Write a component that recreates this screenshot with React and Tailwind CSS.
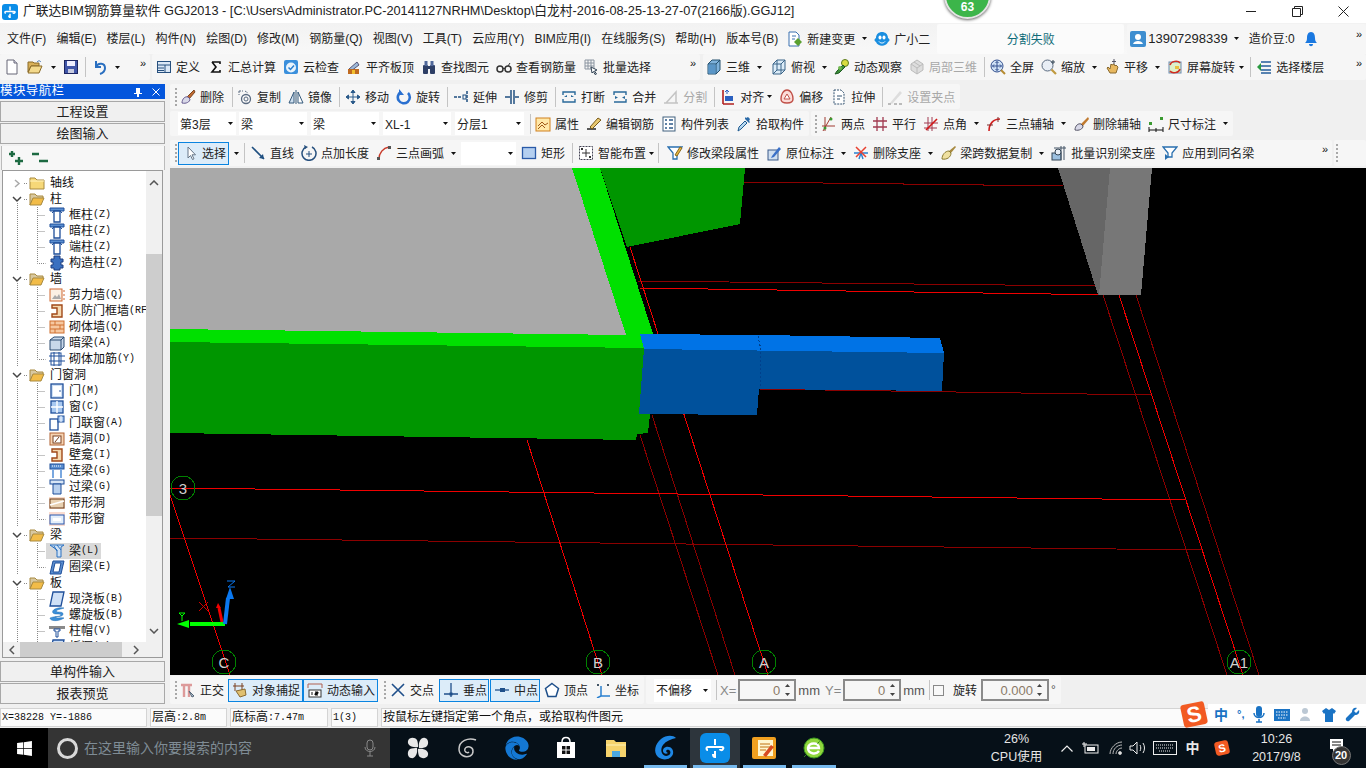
import { FaEdge, FaWindows } from 'react-icons/fa';

// toolbar and tree icons, all on a 16x16 grid
const I = {
  page: <><path d="M3 1h7l3 3v11H3z" fill="#fff" stroke="#667" /><path d="M10 1v3h3" fill="#dde" stroke="#667" /></>,
  open: <><path d="M1 3h5l1 1h5v3H4l-3 6z" fill="#d8b058" stroke="#8a6a28" /><path d="M4 7h11l-3 7H1z" fill="#f3d98c" stroke="#8a6a28" /><path d="M10 3c2-2 3-1 4 0" fill="none" stroke="#3a70b0" /></>,
  save: <><rect x="1.5" y="1.5" width="13" height="13" fill="#4055a8" stroke="#1c2560" /><rect x="4" y="2" width="8" height="5" fill="#eef" /><rect x="5" y="10" width="6" height="4" fill="#c8cce0" /></>,
  undo: <path d="M4 2v6h5M4 8c2-5 9-4 9 1 0 3-2 5-5 6" fill="none" stroke="#2a6fc0" strokeWidth="2" />,
  define: <><rect x="1.5" y="2.5" width="13" height="11" fill="#dbe8f6" stroke="#27507e" /><path d="M2 6h12M2 9h6M2 11.500h6M9 6v7" stroke="#27507e" /></>,
  sigma: <path d="M4 3h8v2M4 3l4 5-4 5h8v-2" fill="none" stroke="#111" strokeWidth="1.6" />,
  cloud: <><rect x="1" y="1" width="14" height="14" rx="2" fill="#3a8fdc" /><circle cx="8" cy="8.500" r="5" fill="#e8f3fc" /><path d="M5.500 8.500l2 2 3.500-4" fill="none" stroke="#2a7fd0" strokeWidth="1.500" /></>,
  flush: <><path d="M3 10l8-7 2 3-8 6z" fill="#9cb8d8" stroke="#557" /><rect x="2" y="10" width="11" height="5" fill="#c06a20" /><rect x="6" y="11" width="3" height="4" fill="#f2c030" /></>,
  binoc: <><rect x="2" y="6" width="5" height="9" rx="1" fill="#2e3f66" /><rect x="9" y="6" width="5" height="9" rx="1" fill="#2e3f66" /><rect x="3.500" y="2" width="3" height="5" fill="#50689a" /><rect x="9.500" y="2" width="3" height="5" fill="#50689a" /><rect x="6" y="7" width="4" height="3" fill="#2e3f66" /></>,
  glasses: <><circle cx="4" cy="10" r="3" fill="none" stroke="#333" strokeWidth="1.500" /><circle cx="12" cy="10" r="3" fill="none" stroke="#333" strokeWidth="1.500" /><path d="M7 9.500h2M12 7l2-3" stroke="#333" /></>,
  batch: <><path d="M2 1h9v9H2zM2 4h9M2 7h9M5 1v9M8 1v9" fill="none" stroke="#8a94a0" /><path d="M8 8l6 3-2.500 1 2 3-1.500.5-1.500-3L9 14z" fill="#fff" stroke="#345" /></>,
  cube: <><path d="M2 5l4-4h8v10l-4 4H2z" fill="#7eb2dc" stroke="#24506e" /><path d="M2 5h8v10M10 5l4-4" fill="none" stroke="#24506e" /><path d="M2.500 5.500h7v9h-7z" fill="#5a96c8" /></>,
  cubeTop: <><path d="M2 5l4-4h8v10l-4 4H2z" fill="#dcecf8" stroke="#3a6488" /><path d="M2 5h8v10M10 5l4-4M2 15l4-4h8M6 1v10" fill="none" stroke="#3a6488" /></>,
  orbit: <><circle cx="11" cy="4" r="3.500" fill="#d8dc40" stroke="#5a7a20" /><path d="M9 6L3 12l-2 3 4-1 6-6z" fill="#3e8e3a" stroke="#1c5a20" /><circle cx="6" cy="9" r="2" fill="#70b850" /></>,
  cubeGray: <><path d="M8 1l6 4v6l-6 4-6-4V5z" fill="#ddd" stroke="#bbb" /><path d="M2 5l6 4 6-4M8 9v6M5 3l6 4" fill="none" stroke="#bbb" /></>,
  full: <><circle cx="7" cy="7" r="6" fill="#d0e2f6" stroke="#324f8e" /><path d="M7 2.500v9M2.500 7h9M7 2.500L5.500 4M7 2.500L8.500 4M7 11.500L5.500 10M7 11.500L8.500 10M2.500 7L4 5.500M2.500 7L4 8.500M11.500 7L10 5.500M11.500 7L10 8.500" stroke="#324f8e" fill="none" /><path d="M11 11l4 4" stroke="#b58a30" strokeWidth="2" /></>,
  zoomI: <><circle cx="6.500" cy="6.500" r="5.500" fill="#e8eef6" stroke="#5a6a80" /><path d="M10.500 10.500l4.500 4.500" stroke="#c09a40" strokeWidth="2.200" /><path d="M12 1v4M10 3h4" stroke="#345" /></>,
  hand: <><path d="M3 9l3 5h6l2-6-2-2-1 1-1-2-2 1-1-1-1 5-2-2z" fill="#e8b860" stroke="#8a6a30" /><path d="M10 0v5M8 2.500h4" stroke="#556" /></>,
  rotate: <><rect x="2" y="3" width="12" height="11" fill="#dff0c8" stroke="#6a8ab0" /><path d="M3 6c1-4 8-5 10-2M13 10c-1 4-8 5-10 2" fill="none" stroke="#d02c20" strokeWidth="1.500" /><rect x="8" y="7" width="4" height="3" fill="#e8c040" /></>,
  floors: <><path d="M5 3h10M5 7h10M5 11h10M5 14h10" stroke="#245e9a" strokeWidth="1.600" /><path d="M1 8l4-4v8z" fill="#2a9a40" /></>,
  newChange: <><path d="M2 1h7l3 3v11H2z" fill="#fff" stroke="#3a70b0" /><path d="M5 5h4M5 8h3" stroke="#3a70b0" /><path d="M11 7l4 4-4 4-4-4z" fill="#5aa030" /></>,
  mascot: <><path d="M2 7c0-8 12-8 12 0 2 1 2 3 0 4-2 5-10 5-12 0-2-1-2-3 0-4z" fill="#1a8ee0" /><ellipse cx="6" cy="6.500" rx="1.500" ry="2" fill="#fff" /><ellipse cx="10" cy="6.500" rx="1.500" ry="2" fill="#fff" /><path d="M5 10.500c1.500 2 4.500 2 6 0" fill="none" stroke="#fff" /></>,
  user: <><rect width="16" height="16" rx="2" fill="#3e8ed0" /><circle cx="8" cy="6" r="3" fill="#fff" /><path d="M3 13c1-4 9-4 10 0z" fill="#fff" /></>,
  bell: <><path d="M8 1c-3 0-4 3-4 6 0 3-1 4-2 5h12c-1-1-2-2-2-5 0-3-1-6-4-6z" fill="#1a78e0" /><path d="M6 13c0 3 4 3 4 0z" fill="#1a78e0" /></>,
  erase: <><path d="M14 1L7 8l2 2 6-7z" fill="#c06a30" stroke="#7a4420" /><path d="M2 14c0-4 3-7 6-6l2 2c0 3-4 5-8 4z" fill="#d8d8e8" stroke="#665a90" /></>,
  copy: <><circle cx="9" cy="10" r="4.500" fill="none" stroke="#5a6a80" strokeWidth="1.300" /><circle cx="9" cy="10" r="2" fill="none" stroke="#5a6a80" /><path d="M2 2l4 0M2 2v4M8 2l3 2" fill="none" stroke="#5a6a80" strokeDasharray="2 1" /></>,
  mirror: <><path d="M1 14L6 3v11z" fill="#cfe0f0" stroke="#33587a" /><path d="M15 14L10 3v11z" fill="#fff" stroke="#33587a" /><path d="M8 1v14" stroke="#33587a" /></>,
  move: <path d="M8 1v14M1 8h14M8 1L6 3.500h4zM8 15l-2-2.500h4zM1 8l2.500-2v4zM15 8l-2.500-2v4z" fill="#2a5a8a" stroke="#2a5a8a" />,
  turn: <><path d="M12 4a6 6 0 1 1-7-1" fill="none" stroke="#2a70d0" strokeWidth="2.600" /><path d="M3 0v6h5z" fill="#2a70d0" /></>,
  extend: <><path d="M14 2v12M1 8h8" stroke="#1f4f80" strokeWidth="1.500" strokeDasharray="3 1" /><rect x="10" y="6" width="3" height="4" fill="none" stroke="#1f4f80" /></>,
  trim: <path d="M7 1v14M10 1v14M1 8h5M11 8h4" stroke="#1f4f80" strokeWidth="1.500" />,
  breakI: <><path d="M2 6v-3h12v3M2 10v3h12v-3" fill="none" stroke="#2a6a9a" strokeWidth="1.400" /><path d="M6 6L3 8h3zM10 6l3 2h-3z" fill="#2a6a9a" /></>,
  merge: <><path d="M2 6V3h12v3M2 13h12v-3" fill="none" stroke="#2a6a9a" strokeWidth="1.400" /><path d="M3 7l3 1.500L3 10zM13 7l-3 1.500 3 1.500z" fill="#2a6a9a" /></>,
  split: <><path d="M1 14h14M3 14L13 3v11" fill="none" stroke="#c4c4c4" strokeWidth="1.500" /></>,
  alignI: <><path d="M3 1v14M3 15h11" stroke="#b02020" strokeWidth="1.600" /><rect x="5" y="7" width="8" height="5" fill="#2a60c0" /><path d="M7 1v4M5 3l2-2 2 2" fill="none" stroke="#2a60c0" /></>,
  offset: <><path d="M8 1c4 0 6 5 6 9 0 3-2 4-6 4s-6-1-6-4c0-4 2-9 6-9z" fill="#fbdcd8" stroke="#c05048" strokeWidth="1.400" /><path d="M8 5l3 5H5z" fill="#fff" stroke="#c05048" /></>,
  stretch: <><path d="M3 1h7l3 3v11H3z" fill="#fff" stroke="#30506e" strokeDasharray="2 1" /><path d="M6 7h5M6 10h3" stroke="#30506e" /></>,
  grip: <><path d="M3 14L13 2l2 2L5 15z" fill="#ddd" /><path d="M1 15h3M7 15h3M12 15h3" stroke="#bbb" strokeWidth="2" /></>,
  attr: <><rect x="1" y="2" width="14" height="13" fill="#ffe8a8" stroke="#d0801e" /><path d="M3 10l4-4 3 3 3-2M3 13l4-4 3 3" fill="none" stroke="#a05818" /></>,
  editBar: <><path d="M1 13h9" stroke="#222" strokeWidth="1.500" /><path d="M4 11l8-9 3 2-9 9z" fill="#e8c870" stroke="#7a5a18" /></>,
  list: <><rect x="2" y="1" width="12" height="14" fill="#fff" stroke="#40607e" /><path d="M4 4h2M8 4h4M4 8h2M8 8h4M4 12h2M8 12h4" stroke="#2d5a88" strokeWidth="1.500" /></>,
  pick: <><path d="M2 15l1-4 6-6 2 2-6 6z" fill="#b8d8f0" stroke="#1f5a90" /><path d="M9 3l4 4 1-1-1-1 1-2-2-2-2 1-1-1z" fill="#2a6aa8" /></>,
  two: <><path d="M4 1v14M10 1L2 15M1 10h13" stroke="#a03a30" /><circle cx="10" cy="3" r="1.500" fill="#3a9a30" /><circle cx="4" cy="12" r="1.500" fill="#3a9a30" /></>,
  par: <path d="M5 1v14M11 1v14M1 5h14M1 11h14" stroke="#a03a50" strokeWidth="1.300" />,
  angle: <><path d="M5 1v14M9 1v14M1 7h14M1 12h13" stroke="#a03a50" /><path d="M3 14L14 3" stroke="#d01818" strokeWidth="1.600" /></>,
  arc: <><path d="M3 15c0-7 4-12 11-12" fill="none" stroke="#d02020" strokeWidth="1.600" /><path d="M1 9h6M12 1v5" stroke="#7a3030" /></>,
  delAxis: <><path d="M15 1L8 8l2 2 6-7z" fill="#c07a30" /><path d="M2 14c0-4 3-7 6-6l2 2c0 3-4 5-8 4z" fill="#d8d8e8" stroke="#556" /></>,
  dim: <><path d="M1 14h14M1 11v5M15 11v5M8 12v4" stroke="#111" /><rect x="1" y="6" width="3" height="3" fill="#3a9a30" /><rect x="12" y="1" width="3" height="3" fill="#3a9a30" /></>,
  cursor: <path d="M6 2v11l2.500-2.500 2 4 1.500-.7-2-4h3.500z" fill="#fff" stroke="#678" />,
  line: <><path d="M2 2l12 12" stroke="#1f4f80" strokeWidth="1.600" /><path d="M14 14l-5-1 4-4z" fill="#1f4f80" /></>,
  addLen: <><path d="M5 2a7 7 0 1 0 6 0" fill="none" stroke="#27507e" strokeWidth="1.500" /><path d="M8 6v6M5 9h6" stroke="#27507e" /><path d="M3 0l4 2-3 2z" fill="#27507e" /></>,
  arc3: <><path d="M3 14C3 8 7 3 13 2" fill="none" stroke="#c83a2a" strokeWidth="1.500" /><rect x="1" y="12" width="3" height="3" fill="#555" /><rect x="12" y="1" width="3" height="3" fill="#555" /></>,
  rectI: <rect x="1.500" y="2.500" width="13" height="11" fill="#b4cff0" stroke="#2a5aa8" strokeWidth="1.300" />,
  smart: <><rect x="1.500" y="1.500" width="13" height="13" fill="#fff" stroke="#445" strokeDasharray="2 1" /><path d="M8 4v8M4 8h8" stroke="#333" /><rect x="3" y="3" width="2" height="2" fill="#333" /><rect x="11" y="11" width="2" height="2" fill="#333" /></>,
  editBeam: <><path d="M1 2h14l-5 6v6H6V8z" fill="#fff" stroke="#2a70b0" strokeWidth="1.300" /><path d="M8 10l5-8 2 1-5 8z" fill="#e8b840" stroke="#8a6a20" /></>,
  inplace: <><rect x="2" y="5" width="10" height="10" fill="#d0dff0" stroke="#3a5a8a" /><path d="M6 11l7-9 2 2-7 8-3 1z" fill="#3a70c8" /></>,
  delSup: <><path d="M1 8h14M6 14l2-6 2 6" fill="none" stroke="#2a80d0" strokeWidth="1.400" /><path d="M3 2l10 10M13 2L3 12" stroke="#e84030" strokeWidth="1.500" /></>,
  brush: <><path d="M15 1L9 6l2 2 5-6z" fill="#a88a40" /><path d="M2 14c0-4 3-8 7-8l2 2c0 4-4 7-9 6z" fill="#efe0a0" stroke="#8a7a30" /></>,
  detect: <><rect x="1" y="8" width="9" height="7" fill="#9cc0e0" stroke="#345" /><path d="M10 1v14M13 1v14M3 3h12" stroke="#456" /><circle cx="7" cy="7" r="3" fill="#e8eef5" stroke="#345" /></>,
  applySame: <><path d="M1 2h14l-5 6v4H6V8z" fill="#fff" stroke="#2a70b0" strokeWidth="1.300" /><path d="M3 9v6l4-3z" fill="#2a70b0" /></>,
  ortho: <><path d="M1 3h11M4 3v12M9 3v12" stroke="#dd9a9a" strokeWidth="2.400" /><path d="M9 9l5 5-2 1z" fill="#b0c0d0" stroke="#567" /></>,
  snap: <><path d="M3 1v8M10 1v8M1 4h11" stroke="#7a4020" /><path d="M4 9l9-2 1 6-6 2z" fill="#e0c070" stroke="#8a6a30" /></>,
  dynIn: <><path d="M1 2h14M1 2v4M15 2v4" stroke="#b06050" /><rect x="2" y="8" width="12" height="7" fill="#fff" stroke="#333" /><path d="M5 10v3M8 10h3v1.500H8V13h3" stroke="#111" /></>,
  cross: <path d="M2 2l12 12M14 2L2 14" stroke="#1f4f8a" strokeWidth="1.600" />,
  perp: <><path d="M8 1v14M1 12h14" stroke="#1f4f8a" strokeWidth="1.300" /><rect x="6.500" y="10.500" width="3" height="3" fill="#1f4f8a" /></>,
  mid: <><path d="M1 8h14" stroke="#1f4f8a" strokeWidth="1.300" /><rect x="6" y="6" width="5" height="4" fill="#1f4f8a" /></>,
  vertex: <path d="M8 1.500l6.500 5-2.500 8H4l-2.500-8z" fill="#fff" stroke="#1f4f8a" strokeWidth="1.500" />,
  coord: <><path d="M6 14V4M6 14h9M6 14l-4 2" stroke="#2a80d0" strokeWidth="1.500" /><path d="M2 2l2 2M4 2L2 4M12 2l2 2M14 2l-2 2" stroke="#456" /></>,
  fClosed: <><path d="M1 3h5l2 2h7v9H1z" fill="#f6d878" stroke="#a88a40" /><path d="M1 6h14" stroke="#fff3c0" /></>,
  fOpen: <><path d="M1 3h5l2 2h6v3H4l-3 6z" fill="#d8c8a0" stroke="#a88a40" /><path d="M4 7h11l-3 7H1z" fill="#f2bc48" stroke="#a88a40" /></>,
  col: <><path d="M1 1h14v3H1z" fill="#5a8ed0" stroke="#1f4f9a" /><path d="M5 4h6v11H5z" fill="#fff" stroke="#1f4f9a" strokeWidth="1.300" /><path d="M5 4l-2 2M11 4l2 2" stroke="#1f4f9a" /></>,
  gz: <path d="M5 1h6v3h3v3h-2v3h2v3h-3v2H5v-2H2v-3h2V7H2V4h3z" fill="#3a70c0" stroke="#1f3f80" />,
  shear: <><rect x="1" y="2" width="12" height="12" fill="#fbf0e4" stroke="#d06830" /><path d="M3 12l3-4 2 2 2-3 2 5z" fill="#aaa" /><path d="M14 4h2M14 8h2M14 12h2" stroke="#d06830" /></>,
  civil: <path d="M3 2h10v12H3v-3h5V5H3z" fill="#f4d8b0" stroke="#a04818" strokeWidth="1.400" />,
  brick: <><rect x="1" y="2" width="14" height="12" fill="#f6c8a0" stroke="#d07030" /><path d="M1 6h14M1 10h14M6 2v4M11 6v4M6 10v4" stroke="#d07030" /></>,
  hidden: <><path d="M1 5l4-3h10v10l-3 3H1z" fill="#c8d8ea" stroke="#2a4a70" /><path d="M1 5h11v10M12 5l3-3" fill="none" stroke="#2a4a70" /></>,
  rebar: <><rect x="2" y="2" width="10" height="12" fill="#fff" stroke="#1f4f9a" /><path d="M0 5h16M0 10h16M5 1v14M10 1v14" stroke="#1f4f9a" /></>,
  door: <><rect x="2" y="1" width="12" height="14" fill="#cfe0f4" stroke="#1f4f9a" strokeWidth="1.300" /><rect x="4" y="3" width="8" height="10" fill="#fff" /><circle cx="11" cy="8" r=".8" fill="#1f4f9a" /></>,
  win: <><rect x="2" y="2" width="12" height="12" fill="#a8c8f0" stroke="#1f4f9a" strokeWidth="1.300" /><path d="M8 2v12M2 8h12" stroke="#fff" strokeWidth="1.400" /></>,
  doorWin: <><rect x="1" y="4" width="8" height="11" fill="#fff" stroke="#1f4f9a" strokeWidth="1.300" /><rect x="9" y="1" width="6" height="6" fill="#a8c8f0" stroke="#1f4f9a" /><path d="M12 1v6" stroke="#fff" /></>,
  hole: <><rect x="1" y="2" width="14" height="12" fill="#f6d4b4" stroke="#b06030" /><rect x="4" y="5" width="8" height="7" fill="#fff" stroke="#7a4020" /><path d="M6 11l4-5" stroke="#7a4020" /></>,
  lintel: <><rect x="1" y="1" width="14" height="5" fill="#5a8ed0" stroke="#1f4f9a" /><path d="M4 6v9M12 6v9" stroke="#7aa8e0" strokeWidth="2" /><path d="M3 3h10" stroke="#fff" strokeDasharray="1 1" /></>,
  over: <><rect x="1" y="1" width="14" height="4" fill="#d8e6f6" stroke="#1f4f9a" /><path d="M4 5h8v10H4z" fill="#b8d0ee" stroke="#1f4f9a" /></>,
  strip: <><rect x="0" y="2" width="16" height="12" fill="#fbdcc8" /><rect x="1" y="4" width="14" height="9" fill="#e8d0b0" stroke="#6a3a18" /><path d="M1 10l14-4" stroke="#fff" strokeWidth="1.500" /></>,
  stripW: <><rect x="0" y="1" width="16" height="14" fill="#fbdcd0" /><rect x="1" y="4" width="14" height="9" fill="#e4eefa" stroke="#2a5ab0" /><rect x="4" y="7" width="8" height="3" fill="#fff" /></>,
  beam: <><path d="M1 2h14l-3 2v10H8V7z" fill="#cfe2f6" stroke="#2a70c0" /><path d="M5 3l3 5M8 2l4 5" stroke="#2a70c0" /></>,
  ring: <path d="M4 2h11l-3 13H1zM6 4l-2 9h6l2-9z" fill="#5a8ed0" stroke="#1f4f9a" fillRule="evenodd" />,
  slab: <path d="M4 1h11l-3 14H1z" fill="#cfe0f6" stroke="#1f4f9a" strokeWidth="1.300" />,
  spiral: <path d="M15 1C8 0 2 3 4 6c2 2 8 0 8 2 0 2-7 1-11 3 0 3 8 4 14 0-3-1-6 1-9-1 3-1 8 0 8-3 0-3-6-1-7-3 2-2 6-2 8-3z" fill="#3a8ed8" stroke="#1f6ab0" strokeWidth=".5" />,
  cap: <><rect x="0" y="3" width="16" height="3" fill="#8a8a8a" /><path d="M5 6h6v2H9v6H7V8H5z" fill="#fff" stroke="#1f4f9a" /></>,
};

const Ico = ({ n, c = '' }) => (
  <svg className={`w-4 h-4 shrink-0 ${c}`} viewBox="0 0 16 16">{I[n]}</svg>
);

const Tool = ({ i, t, c = '', off }) => (
  <div className={`flex items-center shrink-0 h-full ${c}`}>
    <Ico n={i} />
    {t && <span className={`ml-1 pt-[2px] whitespace-nowrap ${off ? 'text-[#a8a8a8]' : 'text-[#222]'}`}>{t}</span>}
  </div>
);

const Caret = ({ c = 'w-[14px] ml-[2px]' }) => (
  <span className={`flex items-center justify-center shrink-0 h-full ${c}`}>
    <svg width="5" height="3"><path d="M0 0h5L2.500 3z" fill="#111" /></svg>
  </span>
);

const Sep = ({ c = '' }) => <span className={`w-px h-[20px] bg-[#c4c4c4] shrink-0 ${c}`} />;

const Grip = ({ c = '' }) => (
  <span className={`w-[2px] h-[18px] shrink-0 border-l-2 border-dotted border-[#a8a8a8] ${c}`} />
);

const More = () => <span className="ml-auto mr-[4px] text-[11px] leading-none text-[#111] pb-2">»</span>;

const Band = ({ c = '', children }) => (
  <div className={`flex items-center bg-[#f6f6f6] rounded-[2px] shrink-0 ${c}`}>{children}</div>
);

const Select = ({ t, c = '' }) => (
  <div className={`flex items-center bg-white h-[23px] pl-[2px] shrink-0 ${c}`}>
    <span className="flex-1 pt-[2px] whitespace-nowrap text-[#222]">{t}</span>
    <Caret c="w-[11px]" />
  </div>
);

const Toggle = ({ i, t, c = '' }) => (
  <div className={`flex items-center h-[23px] pl-[3px] border border-[#0a84e0] bg-[#dcecf9] shrink-0 ${c}`}>
    <Ico n={i} />
    <span className="ml-1 pt-[2px] whitespace-nowrap text-[#222]">{t}</span>
  </div>
);

const Spin = ({ v, c = '' }) => (
  <div className={`flex items-center h-[22px] border-2 border-[#8a8a8a] bg-[#f6f6f6] shrink-0 ${c}`}>
    <span className="flex-1 text-right text-[13px] text-[#8a7a68]">{v}</span>
    <span className="flex flex-col items-center w-[14px] gap-[6px]">
      <svg width="5" height="3"><path d="M0 3h5L2.500 0z" fill="#444" /></svg>
      <svg width="5" height="3"><path d="M0 0h5L2.500 3z" fill="#444" /></svg>
    </span>
  </div>
);

const PanelBtn = ({ t }) => (
  <div className="flex items-center justify-center h-[21px] w-full border border-[#a8a8a8] bg-[#f0f0f0] text-[13px] text-[#222]">{t}</div>
);

const tree = [
  { t: '轴线', f: 'fClosed', closed: true },
  { t: '柱', f: 'fOpen' },
  { t: '框柱', m: '(Z)', f: 'col' },
  { t: '暗柱', m: '(Z)', f: 'col' },
  { t: '端柱', m: '(Z)', f: 'col' },
  { t: '构造柱', m: '(Z)', f: 'gz', last: true },
  { t: '墙', f: 'fOpen' },
  { t: '剪力墙', m: '(Q)', f: 'shear' },
  { t: '人防门框墙', m: '(RF', f: 'civil' },
  { t: '砌体墙', m: '(Q)', f: 'brick' },
  { t: '暗梁', m: '(A)', f: 'hidden' },
  { t: '砌体加筋', m: '(Y)', f: 'rebar', last: true },
  { t: '门窗洞', f: 'fOpen' },
  { t: '门', m: '(M)', f: 'door' },
  { t: '窗', m: '(C)', f: 'win' },
  { t: '门联窗', m: '(A)', f: 'doorWin' },
  { t: '墙洞', m: '(D)', f: 'hole' },
  { t: '壁龛', m: '(I)', f: 'civil' },
  { t: '连梁', m: '(G)', f: 'lintel' },
  { t: '过梁', m: '(G)', f: 'over' },
  { t: '带形洞', f: 'strip' },
  { t: '带形窗', f: 'stripW', last: true },
  { t: '梁', f: 'fOpen' },
  { t: '梁', m: '(L)', f: 'beam', sel: true },
  { t: '圈梁', m: '(E)', f: 'ring', last: true },
  { t: '板', f: 'fOpen' },
  { t: '现浇板', m: '(B)', f: 'slab' },
  { t: '螺旋板', m: '(B)', f: 'spiral' },
  { t: '柱帽', m: '(V)', f: 'cap' },
  { t: '板洞', m: '(N)', f: 'slab' },
];

const TreeRow = ({ r }) => {
  const parent = r.f === 'fOpen' || r.f === 'fClosed';
  return (
    <div className="flex items-center h-4 text-[12px] text-[#111]">
      <svg width="43" height="16" className="shrink-0">
        {parent ? (
          <>
            {r.closed
              ? <path d="M12 5l4 3.500-4 3.500" fill="none" stroke="#aaa" strokeWidth="1.500" />
              : <path d="M10 6l4 4 4-4" fill="none" stroke="#444" strokeWidth="1.500" />}
            <path d="M21 8.500h4" stroke="#888" strokeDasharray="1 1" />
            {!r.closed && <path d="M14.500 12v4" stroke="#888" strokeDasharray="1 1" />}
          </>
        ) : (
          <>
            <path d="M14.500 0v16" stroke="#888" strokeDasharray="1 1" />
            <path d={r.last ? 'M34.500 0v8.500h8' : 'M34.500 0v16M34.500 8.500h8'} fill="none" stroke="#888" strokeDasharray="1 1" />
          </>
        )}
        {parent && <svg x="26" width="16" height="16" viewBox="0 0 16 16">{I[r.f]}</svg>}
      </svg>
      {parent ? (
        <span className="ml-[4px] whitespace-nowrap">{r.t}</span>
      ) : (
        <div className={`flex items-center h-4 pl-[3px] pr-[2px] ${r.sel ? 'bg-[#d9d9d9]' : ''}`}>
          <Ico n={r.f} />
          <span className="ml-[4px] whitespace-nowrap">{r.t}</span>
          {r.m && <span className="font-['Liberation_Mono',monospace] text-[10px]">{r.m}</span>}
        </div>
      )}
    </div>
  );
};

const ChevY = ({ up }) => (
  <svg width="10" height="6"><path d={up ? 'M1 5l4-4 4 4' : 'M1 1l4 4 4-4'} fill="none" stroke="#555" strokeWidth="1.500" /></svg>
);

const ChevX = ({ left }) => (
  <svg width="6" height="10"><path d={left ? 'M5 1L1 5l4 4' : 'M1 1l4 4-4 4'} fill="none" stroke="#555" strokeWidth="1.500" /></svg>
);

const LeftPanel = () => (
  <div className="flex flex-col w-[165px] shrink-0">
    <div className="flex items-center h-[15px] bg-[#0456dc] text-white text-[12.500px] leading-none">
      <span className="tracking-[.4px]">模块导航栏</span>
      <svg className="ml-auto" width="8" height="10"><path d="M2 1h4v5h2v1H5v3H3V7H0V6h2z" fill="#fff" /></svg>
      <svg className="ml-[10px] mr-[5px]" width="8" height="8"><path d="M.5.5l7 7M7.500.5l-7 7" stroke="#fff" /></svg>
    </div>
    <div className="mt-[2px]"><PanelBtn t="工程设置" /></div>
    <div className="mt-px"><PanelBtn t="绘图输入" /></div>
    <div className="flex items-center h-[24px] mt-[2px] ml-[1px] pl-[6px] gap-[7px] bg-[#f7f7f7] border-x border-[#bbb]">
      <svg width="16" height="16"><path d="M4 1v6M1 4h6M11 7v8M7 11h8" stroke="#1d6a42" strokeWidth="2.400" /></svg>
      <svg width="18" height="16"><path d="M1 4h7M8 11h9" stroke="#1d6a42" strokeWidth="2.400" /></svg>
    </div>
    <div className="flex flex-col h-[488px] ml-[2px] mr-[2px] border border-[#9a9a9a] bg-white overflow-hidden">
      <div className="flex h-[471px]">
        <div className="flex-1 pt-[4px] overflow-hidden">
          {tree.map((r, i) => <TreeRow key={i} r={r} />)}
        </div>
        <div className="flex flex-col items-center w-[16px] bg-[#f0f0f0] shrink-0">
          <div className="flex items-center justify-center h-[20px] mt-[2px]"><ChevY up /></div>
          <div className="w-full h-[262px] mt-[61px] bg-[#cdcdcd]" />
          <div className="flex items-center justify-center h-[20px] mt-auto mb-[1px]"><ChevY /></div>
        </div>
      </div>
      <div className="flex items-center h-[16px] bg-[#f0f0f0]">
        <span className="flex justify-center w-[17px]"><ChevX left /></span>
        <span className="w-[102px] h-full bg-[#cdcdcd]" />
        <span className="flex justify-center w-[28px]"><ChevX /></span>
      </div>
    </div>
    <div className="mt-[3px]"><PanelBtn t="单构件输入" /></div>
    <div className="mt-px"><PanelBtn t="报表预览" /></div>
  </div>
);

const Bubble = ({ x, y, t }) => (
  <g>
    <circle cx={x} cy={y} r="12" fill="none" stroke="#008000" />
    <text x={x} y={y + 6} textAnchor="middle" fontSize="15" fill="#d0d0d0" fontFamily="Liberation Sans, sans-serif" shapeRendering="auto">{t}</text>
  </g>
);

// the 3D view is a plain drawing, coordinates are screen pixels
const Scene = () => (
  <svg className="block w-full h-full" viewBox="170 168 1196 507" shapeRendering="crispEdges">
    <rect x="170" y="168" width="1196" height="507" fill="#000" />
    <g stroke="#8b0000" fill="none">
      <path d="M743 182L1063 186" />
      <path d="M637 281L1097 286" />
      <path d="M759 389L1152 395" />
      <path d="M170 538L1202 550" />
      <path d="M640 435L718 675" />
      <path d="M652 415L735 675" />
      <path d="M1103 295L1227 675" />
      <path d="M1136 295L1259 675" />
    </g>
    <g stroke="#f00000" fill="none">
      <path d="M639 288L1119 295" />
      <path d="M170 488L1186 500" />
      <path d="M170 495L230 675" />
      <path d="M527 440L602 675" />
      <path d="M630 247L768 675" />
      <path d="M1119 295L1243 675" />
    </g>
    <polygon points="170,168 572,168 626,335 170,329" fill="#a9a9a9" />
    <polygon points="600,168 745,168 740,224 627,247" fill="#009600" />
    <polygon points="170,342 644,348 640,414 650,414 648,433 637,434 636,440 170,433" fill="#009600" />
    <polygon points="572,168 600,168 653,334 640,334 644,348 170,342 170,329 626,335" fill="#00e000" />
    <polygon points="640,334 760,335 940,338 944,353 644,349" fill="#0073e6" />
    <polygon points="644,349 944,353 942,391 759,389 757,415 639,414" fill="#00519c" />
    <path d="M758 336l3 14-1 38" stroke="#00408c" strokeDasharray="2 2" fill="none" />
    <polygon points="1058,168 1110,168 1099,295 1098,295" fill="#666" />
    <polygon points="1110,168 1152,168 1141,295 1099,295" fill="#777" />
    <Bubble x={183} y={488} t="3" />
    <Bubble x={224} y={662} t="C" />
    <Bubble x={598} y={662} t="B" />
    <Bubble x={764} y={662} t="A" />
    <Bubble x={1239} y={662} t="A1" />
    <g shapeRendering="auto">
      <path d="M225 624H190" stroke="#00ff00" strokeWidth="4" />
      <path d="M177 624l12-4v8z" fill="#00ff00" />
      <path d="M222 622l-3-14" stroke="#f00000" strokeWidth="3" />
      <path d="M218 603l3 5-5 0z" fill="#f00000" />
      <path d="M225 624l3-26" stroke="#0a78f0" strokeWidth="4" />
      <path d="M230 587l4 12h-8z" fill="#0a78f0" />
      <path d="M179 615h6l-3 3v5M179 615l3 3" stroke="#00ff00" fill="none" transform="translate(0 -2)" />
      <path d="M227 581h8l-7 6h7" stroke="#0a78f0" fill="none" />
      <path d="M199 602l9 9M208 602l-9 9" stroke="#d00000" />
    </g>
  </svg>
);

const Sogou = ({ c = '' }) => (
  <span className={`flex items-center justify-center bg-[#f25a22] rounded-[3px] -rotate-12 text-white font-bold font-['Liberation_Sans',sans-serif] ${c}`}>S</span>
);

const TaskSlot = ({ c = '', on, children }) => (
  <div className={`relative flex items-center justify-center w-[49.500px] h-full ${c}`}>
    {children}
    {on && <span className="absolute bottom-0 left-[3px] right-[3px] h-[3px] bg-[#76b9ed]" />}
  </div>
);

const Taskbar = () => (
  <div className="flex items-stretch h-[40px] bg-[#061018] text-white shrink-0">
    <div className="flex items-center justify-center w-[48px] bg-black"><FaWindows className="text-[17px]" /></div>
    <div className="flex items-center w-[342px] bg-[#343434]">
      <span className="ml-[9px] w-[21px] h-[21px] rounded-full border-[3px] border-[#d8d8d8]" />
      <span className="ml-[6px] text-[14px] text-[#7f8c95]">在这里输入你要搜索的内容</span>
      <svg className="ml-auto mr-[14px]" width="12" height="18" viewBox="0 0 12 18"><rect x="3" y="1" width="6" height="10" rx="3" fill="none" stroke="#888" /><path d="M1 8c0 6 10 6 10 0M6 13v4M3 17h6" fill="none" stroke="#888" /></svg>
    </div>
    <div className="flex items-center ml-[3px]">
      <TaskSlot>
        <svg width="24" height="24" viewBox="0 0 24 24" fill="#e8e8e8"><path d="M12 11C6 12 1 9 2 5c1-4 7-4 9-1 1 2 1 5 1 7zM13 12c-1-6 2-11 6-10s4 7 1 9c-2 1-5 1-7 1zM12 13c6-1 11 2 10 6s-7 4-9 1c-1-2-1-5-1-7zM11 12c1 6-2 11-6 10s-4-7-1-9c2-1 5-1 7-1z" /></svg>
      </TaskSlot>
      <TaskSlot>
        <svg width="22" height="22" viewBox="0 0 22 22" fill="none" stroke="#c8c8c8" strokeWidth="1.500"><path d="M20 3C12 0 3 4 3 12c0 6 6 9 11 7 4-2 4-8 0-9-3-1-6 1-5 4 1 2 3 2 4 1" /></svg>
      </TaskSlot>
      <TaskSlot><FaEdge className="text-[24px] text-[#1478d4]" /></TaskSlot>
      <TaskSlot>
        <svg width="20" height="24" viewBox="0 0 20 24"><path d="M1 6h18v16H1z" fill="#fff" /><path d="M6 6c0-6 8-6 8 0" fill="none" stroke="#fff" strokeWidth="1.500" /><path d="M6 10h3.500v3.500H6zM10.500 10H14v3.500h-3.500zM6 14.500h3.500V18H6zM10.500 14.500H14V18h-3.500z" fill="#111" /></svg>
      </TaskSlot>
      <TaskSlot>
        <svg width="22" height="20" viewBox="0 0 22 20"><path d="M1 2h8l2 2h10v15H1z" fill="#f6d36c" /><path d="M1 7h20" stroke="#fff2b8" /><path d="M7 13h8v6H7z" fill="#4ca8e0" /></svg>
      </TaskSlot>
      <TaskSlot on>
        <svg width="24" height="26" viewBox="0 0 24 26"><path d="M23 3c-3-3-10-3-15 1C2 9 0 17 5 22c5 4 13 3 15-3 1-4-2-8-7-7-3 1-4 4-2 6 1 1 3 1 4 0-3-1-2-4 1-3 3 2 1 6-3 6-5-1-6-7-3-11 3-4 8-6 13-7z" fill="#1e88e5" /></svg>
      </TaskSlot>
      <TaskSlot on c="bg-[#2d353c]">
        <div className="flex items-center justify-center w-[30px] h-[30px] rounded-[6px] bg-[#0a8de8]">
          <svg width="20" height="20" viewBox="0 0 20 20" fill="none" stroke="#fff" strokeWidth="2"><path d="M10 1v6M10 13v6c-2 0-2-2-2-3M3 9h14c1 0 2 1 1 2-1 2-3 1-3 0M3 9c-2 0-2 3 0 3" /></svg>
        </div>
      </TaskSlot>
      <TaskSlot on>
        <svg width="26" height="26" viewBox="0 0 26 26"><rect x="1" y="2" width="24" height="22" rx="2" fill="#f0a020" /><rect x="7" y="5" width="15" height="16" fill="#fff6d0" /><path d="M9 9h10M9 12h10M9 15h6" stroke="#c07010" /><path d="M12 20l8-10 3 2-8 10z" fill="#d84a20" /></svg>
      </TaskSlot>
      <TaskSlot on>
        <svg width="26" height="26" viewBox="0 0 26 26"><circle cx="13" cy="13" r="10" fill="#8fd63c" stroke="#3c9a20" /><path d="M7 13h11c0-6-10-6-11 0 0 6 8 7 11 3" fill="none" stroke="#fff" strokeWidth="2.400" /><path d="M3 22L22 3" stroke="#2d7a20" strokeDasharray="3 16" /></svg>
      </TaskSlot>
    </div>
    <div className="flex flex-col items-center justify-center w-[70px] ml-[143px] text-[12.500px] leading-[18px] text-[#e6e6e6]">
      <span>26%</span>
      <span>CPU使用</span>
    </div>
    <div className="flex items-center ml-[5px] text-[#e8e8e8]">
      <svg className="ml-[4px]" width="12" height="7"><path d="M.5 6.500l5.500-5.500 5.500 5.500" fill="none" stroke="#eee" strokeWidth="1.200" /></svg>
      <svg className="ml-[8px]" width="18" height="12"><rect x="4" y="3" width="13" height="8" fill="none" stroke="#eee" /><rect x="6" y="5" width="8" height="4" fill="#eee" /><path d="M1 2h5M3 0v5" stroke="#eee" /></svg>
      <svg className="ml-[10px]" width="14" height="14" viewBox="0 0 14 14" fill="none" stroke="#bbb"><path d="M1 13c0-6 6-12 12-12M4 13c0-5 4-9 9-9M7 13c0-3 3-6 6-6" /><circle cx="11" cy="12" r="1.500" fill="#eee" /></svg>
      <svg className="ml-[6px]" width="16" height="14" viewBox="0 0 16 14" fill="none" stroke="#eee"><path d="M1 5h3l4-4v12L4 9H1zM11 4c1 2 1 4 0 6M14 2c2 3 2 7 0 10" /></svg>
      <svg className="ml-[8px]" width="24" height="14" viewBox="0 0 24 14"><rect x=".5" y=".5" width="23" height="13" fill="none" stroke="#eee" /><path d="M3 4h18M3 7h18M6 10h12" stroke="#eee" strokeDasharray="1 1" /></svg>
      <span className="ml-[9px] text-[14px] font-bold">中</span>
      <Sogou c="ml-[15px] w-[14px] h-[14px] text-[11px]" />
    </div>
    <div className="flex flex-col items-center justify-center w-[60px] ml-[18px] text-[12.500px] leading-[18px] text-[#e6e6e6]">
      <span className="whitespace-nowrap">10:26</span>
      <span className="whitespace-nowrap">2017/9/8</span>
    </div>
    <div className="relative ml-[27px]">
      <svg className="absolute left-[-4px] top-[11px]" width="13" height="13"><path d="M0 0h13v10H6l-3 3v-3H0z" fill="#fff" /><path d="M2 3h9M2 6h9" stroke="#111" /></svg>
      <span className="absolute left-[-2px] top-[18px] flex items-center justify-center w-[19px] h-[19px] rounded-full bg-[#333] border border-[#777] text-[11px] font-bold">20</span>
    </div>
  </div>
);

export default function App() {
  return (
    <div className="relative flex flex-col w-[1366px] h-[768px] overflow-hidden bg-[#f0f0f0] text-[12px] leading-none text-[#222] font-['Liberation_Sans','Noto_Sans_CJK_SC',sans-serif]">
      {/* score badge hanging from the top edge */}
      <div className="absolute left-[944px] top-[-28px] flex items-end justify-center w-[47px] h-[47px] pb-[4px] rounded-full bg-[#3cb54a] border-2 border-[#e4e4e4] shadow-[0_1px_3px_#666] text-white text-[12px] font-bold z-10">63</div>

      {/* title bar */}
      <div className="flex items-center h-[23px] bg-white shrink-0">
        <div className="flex items-center justify-center ml-[2px] w-[16px] h-[16px] rounded-[3px] bg-[#0a8de8]">
          <svg width="12" height="12" viewBox="0 0 20 20" fill="none" stroke="#fff" strokeWidth="2.500"><path d="M10 1v6M10 13v6c-2 0-2-2-2-3M3 9h14c1 0 2 1 1 2-1 2-3 1-3 0M3 9c-2 0-2 3 0 3" /></svg>
        </div>
        <span className="ml-[5px] text-[12.750px] whitespace-nowrap text-[#222]">广联达BIM钢筋算量软件 GGJ2013 - [C:\Users\Administrator.PC-20141127NRHM\Desktop\白龙村-2016-08-25-13-27-07(2166版).GGJ12]</span>
        <div className="flex items-center ml-auto">
          <span className="flex items-center justify-center w-[46px] h-[23px]"><svg width="10" height="2"><path d="M0 .5h10" stroke="#222" /></svg></span>
          <span className="flex items-center justify-center w-[46px] h-[23px]"><svg width="11" height="11"><path d="M.5 2.500h8v8h-8zM2.500 2.500v-2h8v8h-2" fill="none" stroke="#222" /></svg></span>
          <span className="flex items-center justify-center w-[46px] h-[23px]"><svg width="11" height="11"><path d="M.5.5l10 10M10.500.5l-10 10" stroke="#222" /></svg></span>
        </div>
      </div>

      {/* menu bar */}
      <div className="flex items-center h-[31px] shrink-0 bg-gradient-to-b from-[#f2f2f2] to-[#f8f8f8]">
        <div className="flex items-center gap-[10.150px] ml-[7px]">
          <span>文件(F)</span><span>编辑(E)</span><span>楼层(L)</span><span>构件(N)</span>
          <span>绘图(D)</span><span>修改(M)</span><span>钢筋量(Q)</span><span>视图(V)</span>
          <span>工具(T)</span><span>云应用(Y)</span><span>BIM应用(I)</span><span>在线服务(S)</span>
          <span>帮助(H)</span><span>版本号(B)</span>
        </div>
        <Tool i="newChange" t="新建变更" c="ml-[9px]" />
        <Caret />
        <Tool i="mascot" t="广小二" c="ml-[3px]" />
        <div className="flex items-center justify-center w-[187px] h-[30px] ml-[7px] pt-[2px] bg-[#fbfbfb] rounded-[2px] text-[#0d6b78]">分割失败</div>
        <div className="flex items-center flex-1 h-[30px] ml-[3px] bg-[#f6f6f6] rounded-[2px]">
          <Tool i="user" c="ml-[3px]" />
          <span className="ml-[2px] text-[13px]">13907298339</span>
          <Caret c="w-[14px] ml-[2px]" />
          <span className="ml-[5px]">造价豆:0</span>
          <Tool i="bell" c="ml-[8px]" />
          <More />
        </div>
      </div>

      {/* standard toolbar */}
      <div className="flex items-start h-[30px] shrink-0">
        <Band c="w-[150px] h-[26px]">
          <Tool i="page" c="ml-[4px]" />
          <Tool i="open" c="ml-[7px]" />
          <Caret c="w-[14px] ml-[3px]" />
          <Tool i="save" c="ml-[3px]" />
          <Sep c="ml-[6px]" />
          <Tool i="undo" c="ml-[6px]" />
          <Caret />
          <More />
        </Band>
        <Band c="w-[548px] h-[26px] ml-[2px]">
          <Tool i="define" t="定义" c="ml-[4px]" />
          <Tool i="sigma" t="汇总计算" c="ml-[8px]" />
          <Tool i="cloud" t="云检查" c="ml-[7px]" />
          <Tool i="flush" t="平齐板顶" c="ml-[7px]" />
          <Tool i="binoc" t="查找图元" c="ml-[7px]" />
          <Tool i="glasses" t="查看钢筋量" c="ml-[7px]" />
          <Tool i="batch" t="批量选择" c="ml-[7px]" />
          <More />
        </Band>
        <Band c="flex-1 h-[26px] ml-[3px]">
          <Tool i="cube" t="三维" c="ml-[3px]" />
          <Caret />
          <Tool i="cubeTop" t="俯视" c="ml-[5px]" />
          <Caret />
          <Tool i="orbit" t="动态观察" c="ml-[3px]" />
          <Tool i="cubeGray" t="局部三维" c="ml-[7px]" off />
          <Sep c="ml-[7px]" />
          <Tool i="full" t="全屏" c="ml-[5px]" />
          <Tool i="zoomI" t="缩放" c="ml-[7px]" />
          <Caret />
          <Tool i="hand" t="平移" c="ml-[3px]" />
          <Caret />
          <Tool i="rotate" t="屏幕旋转" c="ml-[3px]" />
          <Caret c="w-[10px] ml-px" />
          <Sep c="ml-[4px]" />
          <Tool i="floors" t="选择楼层" c="ml-[5px]" />
          <More />
        </Band>
      </div>

      <div className="flex flex-1 min-h-0">
        <LeftPanel />
        <div className="flex flex-col flex-1 min-w-0 ml-[5px]">
          {/* edit toolbar */}
          <div className="flex items-start h-[26px] shrink-0">
            <Band c="h-[25px] pr-[5px]">
              <Grip c="ml-[5px]" />
              <Tool i="erase" t="删除" c="ml-[3px]" />
              <Sep c="ml-[8px]" />
              <Tool i="copy" t="复制" c="ml-[4px]" />
              <Tool i="mirror" t="镜像" c="ml-[7px]" />
              <Sep c="ml-[7px]" />
              <Tool i="move" t="移动" c="ml-[5px]" />
              <Tool i="turn" t="旋转" c="ml-[7px]" />
              <Sep c="ml-[7px]" />
              <Tool i="extend" t="延伸" c="ml-[5px]" />
              <Tool i="trim" t="修剪" c="ml-[7px]" />
              <Sep c="ml-[7px]" />
              <Tool i="breakI" t="打断" c="ml-[5px]" />
              <Tool i="merge" t="合并" c="ml-[7px]" />
              <Tool i="split" t="分割" c="ml-[7px]" off />
              <Sep c="ml-[7px]" />
              <Tool i="alignI" t="对齐" c="ml-[5px]" />
              <Caret c="w-[8px] ml-px" />
              <Tool i="offset" t="偏移" c="ml-[6px]" />
              <Tool i="stretch" t="拉伸" c="ml-[8px]" />
              <Sep c="ml-[7px]" />
              <Tool i="grip" t="设置夹点" c="ml-[4px]" off />
            </Band>
          </div>

          {/* property toolbar */}
          <div className="flex items-start h-[28px] pt-px shrink-0">
            <Band c="h-[25px] w-[639px]">
              <Select t="第3层" c="w-[58px] ml-[8px]" />
              <Select t="梁" c="w-[68px] ml-[3px]" />
              <Select t="梁" c="w-[68px] ml-[4px]" />
              <Select t="XL-1" c="w-[68px] ml-[4px]" />
              <Select t="分层1" c="w-[69px] ml-[4px]" />
              <Sep c="ml-[6px]" />
              <Tool i="attr" t="属性" c="ml-[4px]" />
              <Tool i="editBar" t="编辑钢筋" c="ml-[7px]" />
              <Tool i="list" t="构件列表" c="ml-[7px]" />
              <Tool i="pick" t="拾取构件" c="ml-[7px]" />
            </Band>
            <Band c="h-[25px] ml-[2px] pr-px">
              <Grip c="ml-[4px]" />
              <Tool i="two" t="两点" c="ml-[4px]" />
              <Tool i="par" t="平行" c="ml-[7px]" />
              <Tool i="angle" t="点角" c="ml-[7px]" />
              <Caret />
              <Tool i="arc" t="三点辅轴" c="ml-[3px]" />
              <Caret />
              <Tool i="delAxis" t="删除辅轴" c="ml-[3px]" />
              <Tool i="dim" t="尺寸标注" c="ml-[7px]" />
              <Caret />
            </Band>
          </div>

          {/* draw toolbar */}
          <div className="flex items-start h-[30px] pt-[2px] shrink-0">
            <Band c="h-[26px] w-[1162px]">
              <Grip c="ml-[5px]" />
              <Toggle i="cursor" t="选择" c="w-[51px] ml-px" />
              <Caret c="w-[14px]" />
              <Sep c="ml-px" />
              <Tool i="line" t="直线" c="ml-[5px]" />
              <Tool i="addLen" t="点加长度" c="ml-[7px]" />
              <Tool i="arc3" t="三点画弧" c="ml-[7px]" />
              <Caret />
              <Select t="" c="w-[55px] ml-px" />
              <Tool i="rectI" t="矩形" c="ml-[5px]" />
              <Sep c="ml-[7px]" />
              <Tool i="smart" t="智能布置" c="ml-[5px]" />
              <Caret c="w-[8px] ml-px" />
              <Sep c="ml-[3px]" />
              <Tool i="editBeam" t="修改梁段属性" c="ml-[8px]" />
              <Tool i="inplace" t="原位标注" c="ml-[7px]" />
              <Caret />
              <Tool i="delSup" t="删除支座" c="ml-[3px]" />
              <Caret />
              <Tool i="brush" t="梁跨数据复制" c="ml-[3px]" />
              <Caret />
              <Tool i="detect" t="批量识别梁支座" c="ml-[3px]" />
              <Tool i="applySame" t="应用到同名梁" c="ml-[7px]" />
              <More />
            </Band>
            <Band c="flex-1 h-[26px] ml-[2px]">
              <Grip c="ml-[2px]" />
            </Band>
          </div>

          <div className="flex-1 min-h-0 overflow-hidden"><Scene /></div>

          {/* snap toolbar */}
          <div className="flex items-start h-[31px] pt-px shrink-0">
            <Band c="h-[28px] pr-[5px]">
              <Grip c="ml-[5px]" />
              <Tool i="ortho" t="正交" c="ml-[3px]" />
              <Toggle i="snap" t="对象捕捉" c="w-[75px] ml-[4px]" />
              <Toggle i="dynIn" t="动态输入" c="w-[75px]" />
              <Grip c="ml-[6px]" />
              <Tool i="cross" t="交点" c="ml-[4px]" />
              <Toggle i="perp" t="垂点" c="w-[50px] ml-[5px]" />
              <Toggle i="mid" t="中点" c="w-[50px] ml-px" />
              <Tool i="vertex" t="顶点" c="ml-[4px]" />
              <Tool i="coord" t="坐标" c="ml-[7px]" />
            </Band>
            <Band c="h-[28px] ml-[2px] pr-[5px]">
              <Select t="不偏移" c="w-[57px] ml-[8px]" />
              <Sep c="ml-[5px]" />
              <span className="ml-[3px] text-[13px] text-[#888]">X=</span>
              <Spin v="0" c="w-[58px] ml-[2px]" />
              <span className="ml-[2px] text-[13px] text-[#555]">mm</span>
              <span className="ml-[5px] text-[13px] text-[#888]">Y=</span>
              <Spin v="0" c="w-[58px] ml-[2px]" />
              <span className="ml-[2px] text-[13px] text-[#555]">mm</span>
              <Sep c="ml-[4px]" />
              <span className="w-[11px] h-[11px] ml-[3px] border border-[#888] bg-[#f8f8f8]" />
              <span className="ml-[9px] pt-[2px]">旋转</span>
              <Spin v="0.000" c="w-[68px] ml-[4px]" />
              <span className="ml-[2px] text-[#555]">°</span>
            </Band>
          </div>
        </div>
      </div>

      {/* status bar */}
      <div className="flex items-center gap-[3px] h-[22px] shrink-0 text-[#111] font-['Liberation_Mono','Noto_Sans_CJK_SC',monospace] text-[10px]">
        <div className="flex items-center w-[147px] h-[19px] pl-[1px] pt-[2px] bg-[#fbfbfb] border border-[#d4d4d4]">X=38228 Y=-1886</div>
        <div className="flex items-center w-[77px] h-[19px] pl-[1px] pt-[2px] bg-[#fbfbfb] border border-[#d4d4d4]"><span className="text-[12px]">层高</span>:2.8m</div>
        <div className="flex items-center w-[98px] h-[19px] pl-[1px] pt-[2px] bg-[#fbfbfb] border border-[#d4d4d4]"><span className="text-[12px]">底标高</span>:7.47m</div>
        <div className="flex items-center w-[47px] h-[19px] pl-[1px] pt-[2px] bg-[#fbfbfb] border border-[#d4d4d4]">1(3)</div>
        <div className="flex items-center flex-1 h-[19px] pl-[1px] pt-[2px] bg-[#fbfbfb] border border-[#d4d4d4] text-[12px]">按鼠标左键指定第一个角点，或拾取构件图元</div>
      </div>

      {/* Sogou IME bar floats over the status bar */}
      <div className="absolute left-[1182px] top-[702px] flex items-center w-[184px] h-[25px] z-10">
        <Sogou c="w-[24px] h-[23px] text-[22px]" />
        <div className="flex items-center flex-1 h-[22px] ml-[2px] pl-[6px] gap-[9px] bg-white text-[#1a73c4]">
          <span className="text-[14px] font-bold">中</span>
          <span className="text-[11px] font-bold">°,</span>
          <svg width="12" height="17" viewBox="0 0 12 17"><rect x="3" y="0" width="6" height="11" rx="3" fill="#1a73c4" /><path d="M1 7c0 6 10 6 10 0M6 13v3M3 16h6" fill="none" stroke="#1a73c4" strokeWidth="1.500" /></svg>
          <svg width="16" height="12"><rect width="16" height="12" fill="#1a73c4" /><path d="M2 3h12M2 6h12M4 9h8" stroke="#fff" strokeDasharray="1.500 1" /></svg>
          <svg width="14" height="16"><circle cx="6" cy="4" r="3" fill="#bcc8d4" /><path d="M1 14c0-6 10-6 10 0z" fill="#bcc8d4" /></svg>
          <svg width="14" height="14"><path d="M4 0l3 2 3-2 4 3-2 3-1-1v9H3V5L2 6 0 3z" fill="#1a73c4" /></svg>
          <svg width="15" height="15"><path d="M14 3l-3 3-2-2 3-3c-3-1-5 1-5 4L1 11c-1 2 1 4 3 3l6-6c3 0 5-2 4-5z" fill="#1a73c4" /></svg>
        </div>
      </div>

      <Taskbar />
    </div>
  );
}
